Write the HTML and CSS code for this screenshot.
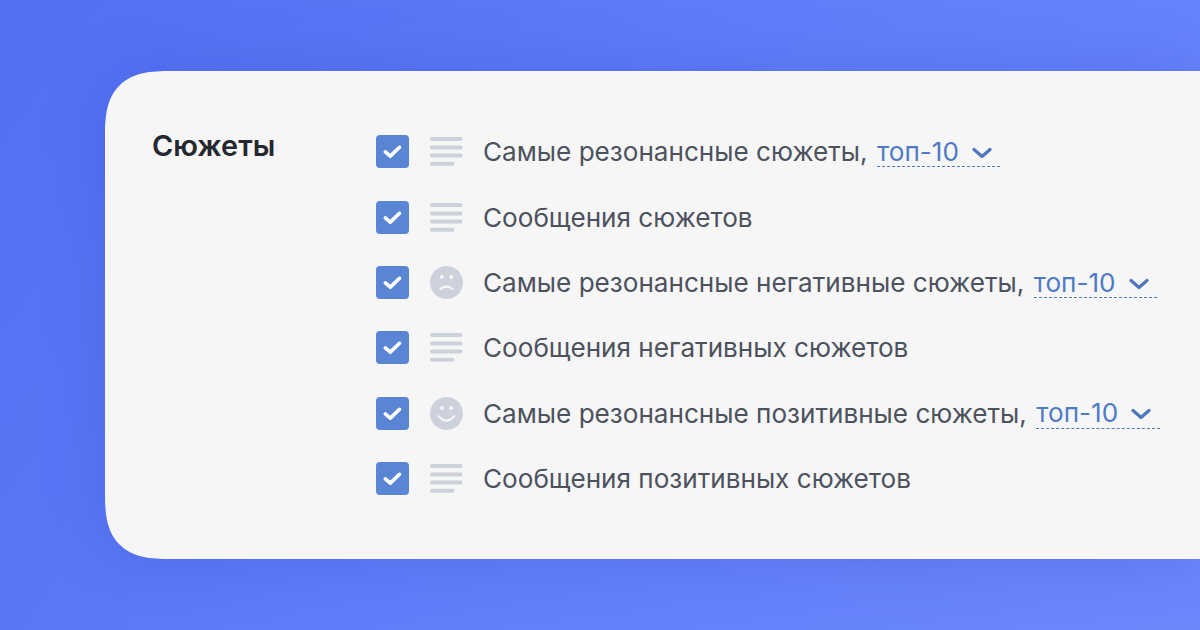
FILE: index.html
```html
<!DOCTYPE html>
<html lang="ru">
<head>
<meta charset="utf-8">
<title>Сюжеты</title>
<link rel="stylesheet" href="styles.css">
</head>
<body>
<svg class="defs" width="0" height="0" aria-hidden="true">
  <symbol id="check" viewBox="0 0 33 33"><path d="M9.300 16.800l5 4.300 9.200-8.800" fill="none" stroke="#fff" stroke-width="3.600" stroke-linecap="round" stroke-linejoin="round"/></symbol>
  <symbol id="lines" viewBox="0 0 33 33"><g fill="#ccd1db"><rect x="0" y="2" width="32.500" height="4" rx="2"/><rect x="0" y="10.400" width="32.500" height="4" rx="2"/><rect x="0" y="18.400" width="32.500" height="4" rx="2"/><rect x="0" y="26.700" width="24.500" height="4" rx="2"/></g></symbol>
  <symbol id="sad" viewBox="0 0 33 33"><circle cx="16.500" cy="16.500" r="16.500" fill="#ccd1db"/><circle cx="11.800" cy="11" r="2" fill="#f6f6f6"/><circle cx="21.200" cy="11" r="2" fill="#f6f6f6"/><path d="M10.500 23q6-5 12 0" fill="none" stroke="#f6f6f6" stroke-width="2.200" stroke-linecap="round"/></symbol>
  <symbol id="happy" viewBox="0 0 33 33"><circle cx="16.500" cy="16.500" r="16.500" fill="#ccd1db"/><circle cx="11.800" cy="11" r="2" fill="#f6f6f6"/><circle cx="21.200" cy="11" r="2" fill="#f6f6f6"/><path d="M8.800 19.300q7.700 8.700 15.400 0" fill="none" stroke="#f6f6f6" stroke-width="2.200" stroke-linecap="round"/></symbol>
  <symbol id="chev" viewBox="0 0 20 12"><path d="M2 2.500l8 7 8-7" fill="none" stroke="#4f76bd" stroke-width="3.200" stroke-linecap="round" stroke-linejoin="round"/></symbol>
</svg>
<main class="card">
  <h2 class="title">Сюжеты</h2>
  <ul class="list">
    <li class="row">
      <span class="box"><svg class="ico"><use href="#check"/></svg></span>
      <svg class="ico"><use href="#lines"/></svg>
      <span class="label">Самые резонансные сюжеты,</span>
      <a class="top">топ-10<svg class="chev"><use href="#chev"/></svg></a>
    </li>
    <li class="row">
      <span class="box"><svg class="ico"><use href="#check"/></svg></span>
      <svg class="ico"><use href="#lines"/></svg>
      <span class="label">Сообщения сюжетов</span>
    </li>
    <li class="row">
      <span class="box"><svg class="ico"><use href="#check"/></svg></span>
      <svg class="ico"><use href="#sad"/></svg>
      <span class="label">Самые резонансные негативные сюжеты,</span>
      <a class="top">топ-10<svg class="chev"><use href="#chev"/></svg></a>
    </li>
    <li class="row">
      <span class="box"><svg class="ico"><use href="#check"/></svg></span>
      <svg class="ico"><use href="#lines"/></svg>
      <span class="label">Сообщения негативных сюжетов</span>
    </li>
    <li class="row">
      <span class="box"><svg class="ico"><use href="#check"/></svg></span>
      <svg class="ico"><use href="#happy"/></svg>
      <span class="label">Самые резонансные позитивные сюжеты,</span>
      <a class="top">топ-10<svg class="chev"><use href="#chev"/></svg></a>
    </li>
    <li class="row">
      <span class="box"><svg class="ico"><use href="#check"/></svg></span>
      <svg class="ico"><use href="#lines"/></svg>
      <span class="label">Сообщения позитивных сюжетов</span>
    </li>
  </ul>
</main>
</body>
</html>
```
FILE: styles.css
```css
html, body { margin: 0; height: 630px; overflow: hidden; }
body {
  width: 1200px;
  padding: 71px 0 0 105px;
  box-sizing: border-box;
  background: linear-gradient(125deg, #516ff2 0%, #5f7ffa 50%, #6c88fb 100%);
  font-family: Inter, "Noto Sans", sans-serif;
}
.defs { position: absolute; }
.card {
  width: 1095px;
  height: 488px;
  box-sizing: border-box;
  padding: 58px 0 0 47px;
  display: flex;
  background: #f6f6f6;
  border-radius: 65px 0 0 65px;
  corner-shape: superellipse(1.46);
  box-shadow: 0 0 60px rgba(50, 70, 190, .28);
}
.title {
  margin: 0;
  width: 224px;
  font-size: 28.8px;
  line-height: 34px;
  font-weight: 600;
  color: #25282e;
  flex: none;
}
.list {
  margin: 6.3px 0 0;
  padding: 0;
  list-style: none;
  display: flex;
  flex-direction: column;
  gap: 32.4px;
}
.row {
  display: flex;
  align-items: center;
  height: 33px;
  font-size: 26.12px;
  color: #4c525e;
  white-space: nowrap;
}
.box {
  width: 33px;
  height: 33px;
  margin-right: 21px;
  border-radius: 4px;
  corner-shape: round;
  background: #5a85d4;
}
.ico { display: block; width: 33px; height: 33px; }
.label { margin-left: 20px; }
.top {
  display: flex;
  align-items: center;
  margin-left: 9.5px;
  height: 30px;
  color: #4f7bc4;
  border-bottom: 1px dashed #4f7bc4;
}
.chev { width: 20px; height: 12px; margin-left: 13px; margin-right: 8.5px; margin-top: 3px; }
```
